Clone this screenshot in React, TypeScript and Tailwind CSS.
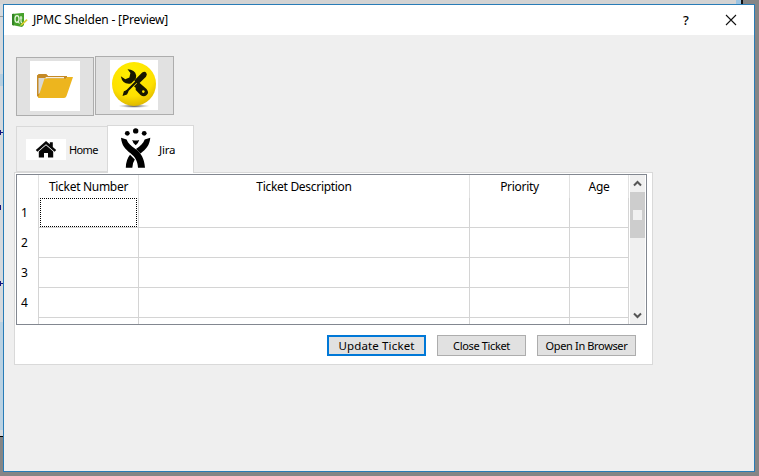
import React from "react";

const rows = [1, 2, 3, 4];
const cell = "border-r border-b border-[#d4d4d4]";
const columns = "grid grid-cols-[22px_100px_331px_100px_59px]";

function QtLogo() {
  return (
    <svg width="16" height="15" viewBox="0 0 16 15" className="shrink-0">
      <path d="M0 1L10 0H12V12L10 14L0 12Z" fill="#46a12b" />
      <path d="M0 1L2 .7V12.5L0 12Z" fill="#328425" />
      <ellipse cx="5" cy="6" rx="2" ry="3.3" fill="none" stroke="#e4f5dc" strokeWidth="1.3" />
      <path d="M5.5 8l2 2.5M9 3v5.5q0 1 1 .8M7.8 5h2.5" fill="none" stroke="#e4f5dc" strokeWidth="1.2" />
      <path d="M8 13l1-2 5.5-5 1.2 1.2-5.4 5.1z" fill="#d9ce31" />
    </svg>
  );
}

function Folder() {
  return (
    <svg width="50" height="50" viewBox="0 0 50 50" className="bg-white">
      <path d="M7 35.5V15l2-2h7l2 2h18v3" fill="#b98128" />
      <path d="M7 14.5V35l3 2L13 17h24v-2H18l-2-2H9z" fill="#c58a26" />
      <path d="M8.5 17h9l-5 14-4 2z" fill="#d8d8d5" />
      <path d="M15 17.5h19V16H16z" fill="#f5eee0" />
      <path d="M14.5 17.5H36l1-1.5h6L36.5 35q-.7 2-2.5 2H8z" fill="#edb51e" />
    </svg>
  );
}

function Tools() {
  return (
    <svg width="48" height="50" viewBox="0 0 48 50" className="bg-white">
      <defs>
        <radialGradient id="disc" cx="45%" cy="25%" r="75%">
          <stop offset="0" stopColor="#fff000" />
          <stop offset=".7" stopColor="#fee000" />
          <stop offset="1" stopColor="#dfb900" />
        </radialGradient>
        <radialGradient id="shade">
          <stop offset="0" stopColor="#333" />
          <stop offset="1" stopColor="#999" stopOpacity="0" />
        </radialGradient>
      </defs>
      <ellipse cx="24" cy="46" rx="16" ry="2" fill="url(#shade)" />
      <circle cx="24" cy="24" r="22" fill="url(#disc)" />
      <path d="M17.5 9.2Q25 9.4 26.2 15.5L25.8 19L30 23.5L25.5 27.8L21 23.6Q12.5 25 10.8 16.3L15.3 19.2L19.4 17.6L20.4 13Z" fill="#171600" />
      <path d="M25.7 27l4-3.9 6.8 5.8q3 3.4 .2 6.2-3 2.6-6.2-.2l-4.8-5z" fill="#171600" />
      <path d="M15 32.5L29 18.5" stroke="#ffe600" strokeWidth="4" />
      <path d="M14.5 33.5L28.5 19.5" stroke="#171600" strokeWidth="2.2" />
      <path d="M12.5 36l1.4-4.8 3.2-1.2 1.4 1.4-1.5 3.2z" fill="#171600" />
      <path d="M24.2 20.6l8-8q2.6-1.6 4 .1t-.2 4L28 24.6z" fill="#171600" />
      <circle cx="33.3" cy="31.6" r="1.3" fill="#ffe600" />
    </svg>
  );
}

function Home() {
  return (
    <svg width="40" height="21" viewBox="0 0 40 21" className="bg-white">
      <path d="M20 2L9.8 11l1.6 1.8L20 5.2l8.6 7.6 1.6-1.8-3.4-3V3.2h-3v2z" fill="#080808" />
      <path d="M20 6.2l-7.2 6.4V18.6h5.2V14h4v4.6h5.2v-6z" fill="#080808" />
    </svg>
  );
}

function JiraMark() {
  return (
    <svg width="30" height="43" viewBox="0 0 30 43">
      <circle cx="6.3" cy="5.3" r="2.4" />
      <circle cx="14.7" cy="2.9" r="2.7" />
      <circle cx="23.2" cy="5.3" r="2.4" />
      <path d="M11.2 12q3.5 1.2 7 0-.8 3.3-3.5 5.3-2.8-2-3.5-5.3z" />
      <path d="M0 9.8L5.6 11.6C7 15.5 10 18 14.5 21C20 25.2 23.3 30 24 39.8H17C16.5 32.5 14 29 9.5 25.3C4 21 .8 17.5 0 9.8Z" />
      <path d="M29.3 9.8L23.7 11.6C22.3 15.5 19.5 18 15 21L19.5 25.6C25.3 21 28.5 17.5 29.3 9.8Z" />
      <path d="M9 26.8L13.8 31.5Q11.6 34.5 11.3 39.8H4.8Q5 31.5 9 26.8Z" />
    </svg>
  );
}

function Chevron({ down = false }: { down?: boolean }) {
  return (
    <svg width="9" height="7" viewBox="0 0 9 7" className={down ? "rotate-180" : ""}>
      <path d="M1 5.5L4.5 2L8 5.5" fill="none" stroke="#555" strokeWidth="2" />
    </svg>
  );
}

export default function App() {
  return (
    <div className="relative h-[476px] w-[759px] overflow-hidden bg-[#858585] pt-1 pl-[3px] font-['Noto_Sans',sans-serif] text-[12px] leading-4 text-black">
      <div className="absolute top-0 left-0 h-[436px] w-[3px] bg-[#d5d9dd]" />
      <div className="absolute top-0 left-0 h-1 w-[742px] bg-[#d3d3d3]" />
      <div className="absolute top-0 left-[736px] h-1 w-[5px] bg-[#9cc4e2]" />
      <div className="absolute top-0 left-[741px] h-1 w-[2px] bg-[#111]" />
      <div className="absolute top-4 left-0 h-px w-[3px] bg-[#999]" />
      <div className="absolute top-[74px] left-0 h-3 w-[3px] bg-[#b7cedf]" />
      <div className="absolute top-[130px] left-0 h-[5px] w-px bg-[#151580]" />
      <div className="absolute top-[132px] left-0 h-px w-[3px] bg-[#151580]" />
      <div className="absolute top-[205px] left-0 h-[5px] w-px bg-[#151580]" />
      <div className="absolute top-[281px] left-0 h-[5px] w-px bg-[#151580]" />
      <div className="absolute top-[283px] left-0 h-px w-[3px] bg-[#151580]" />
      <div className="absolute top-[322px] left-0 h-[108px] w-[3px] bg-[#b9d1e2]" />
      <div className="absolute top-[436px] left-0 h-px w-[3px] bg-black" />

      <main className="relative h-[468px] w-[752px] border border-[#287cb7] bg-[#efefef]">
        <header className="flex h-[30px] items-center bg-white pl-2">
          <QtLogo />
          <span className="ml-[5px] w-[136px] tracking-[-0.17px] whitespace-nowrap">JPMC Shelden - [Preview]</span>
          <span className="ml-[511px] w-3 text-center text-[13px] font-medium">?</span>
          <svg width="12" height="12" viewBox="0 0 12 12" className="ml-[33px]">
            <path d="M1 1l10 10M11 1L1 11" stroke="#111" strokeWidth="1.1" />
          </svg>
        </header>

        <div className="ml-3 flex h-[81px] items-start gap-px pt-[21px]">
          <button className="mt-px flex h-[59px] w-[78px] items-start border border-[#adadad] bg-[#e1e1e1] pt-[3px] pl-[13px]"><Folder /></button>
          <button className="flex h-[59px] w-[79px] items-start border border-[#adadad] bg-[#e1e1e1] pt-[3px] pl-[14px]"><Tools /></button>
        </div>

        <nav className="relative z-10 ml-3 flex h-[57px] items-end">
          <div className="mb-px flex h-[46px] w-[91px] items-center border border-r-0 border-[#d9d9d9] bg-[#f0f0f0] pl-[9px]">
            <Home /><span className="ml-[3px] pt-px text-[11px] tracking-[-0.65px]">Home</span>
          </div>
          <div className="flex h-[48px] w-[87px] items-center border border-b-0 border-[#d9d9d9] bg-white pl-[13px]">
            <JiraMark /><span className="ml-2 text-[11.5px] tracking-[-0.2px]">Jira</span>
          </div>
        </nav>

        <section className="ml-[10px] -mt-px h-[193px] w-[639px] border border-[#d9d9d9] bg-white px-px pt-px">
          <div className="flex h-[151px] w-[631px] overflow-hidden border border-[#828790]">
            <div className="w-[612px] shrink-0">
              <div className={`${columns} h-[23px] text-center leading-[24px] tracking-[-0.3px]`}>
                <div className="border-r border-[#e1e1e1]" />
                {["Ticket Number", "Ticket Description", "Priority", "Age"].map((label) => (
                  <div key={label} className="border-r border-[#e1e1e1]">{label}</div>
                ))}
              </div>
              {rows.map((row) => (
                <div key={row} className={`${columns} h-[30px]`}>
                  <div className="border-r border-[#d4d4d4] pl-1 leading-[29px]">{row}</div>
                  <div className={`${cell} pr-px pl-px`}>
                    {row === 1 && <div className="h-[29px] border border-dotted border-black" />}
                  </div>
                  <div className={cell} /><div className={cell} /><div className={cell} />
                </div>
              ))}
              <div className={`${columns} h-[6px]`}>
                {[0, 1, 2, 3, 4].map((column) => <div key={column} className="border-r border-[#d4d4d4]" />)}
              </div>
            </div>
            <div className="ml-px flex h-[149px] w-[15px] flex-col items-center bg-[#f0f0f0]">
              <div className="flex h-[17px] items-center"><Chevron /></div>
              <div className="flex h-[46px] w-full items-center justify-center bg-[#cdcdcd]">
                <div className="h-[10px] w-[9px] bg-[#f0f0f0]" />
              </div>
              <div className="mt-auto flex h-[17px] items-center"><Chevron down /></div>
            </div>
          </div>
          <div className="ml-[311px] flex gap-[11px] pt-[10px]">
            <button className="h-[21px] w-[99px] border-2 border-[#0078d7] bg-[#e1e1e1] text-[11.5px] leading-[18px] tracking-[0.15px] whitespace-nowrap">Update Ticket</button>
            <button className="h-[21px] w-[89px] border border-[#adadad] bg-[#e1e1e1] text-[11px] leading-[20px] tracking-[-0.35px] whitespace-nowrap">Close Ticket</button>
            <button className="h-[21px] w-[99px] border border-[#adadad] bg-[#e1e1e1] text-[11px] leading-[20px] tracking-[-0.36px] whitespace-nowrap">Open In Browser</button>
          </div>
        </section>
      </main>
    </div>
  );
}
